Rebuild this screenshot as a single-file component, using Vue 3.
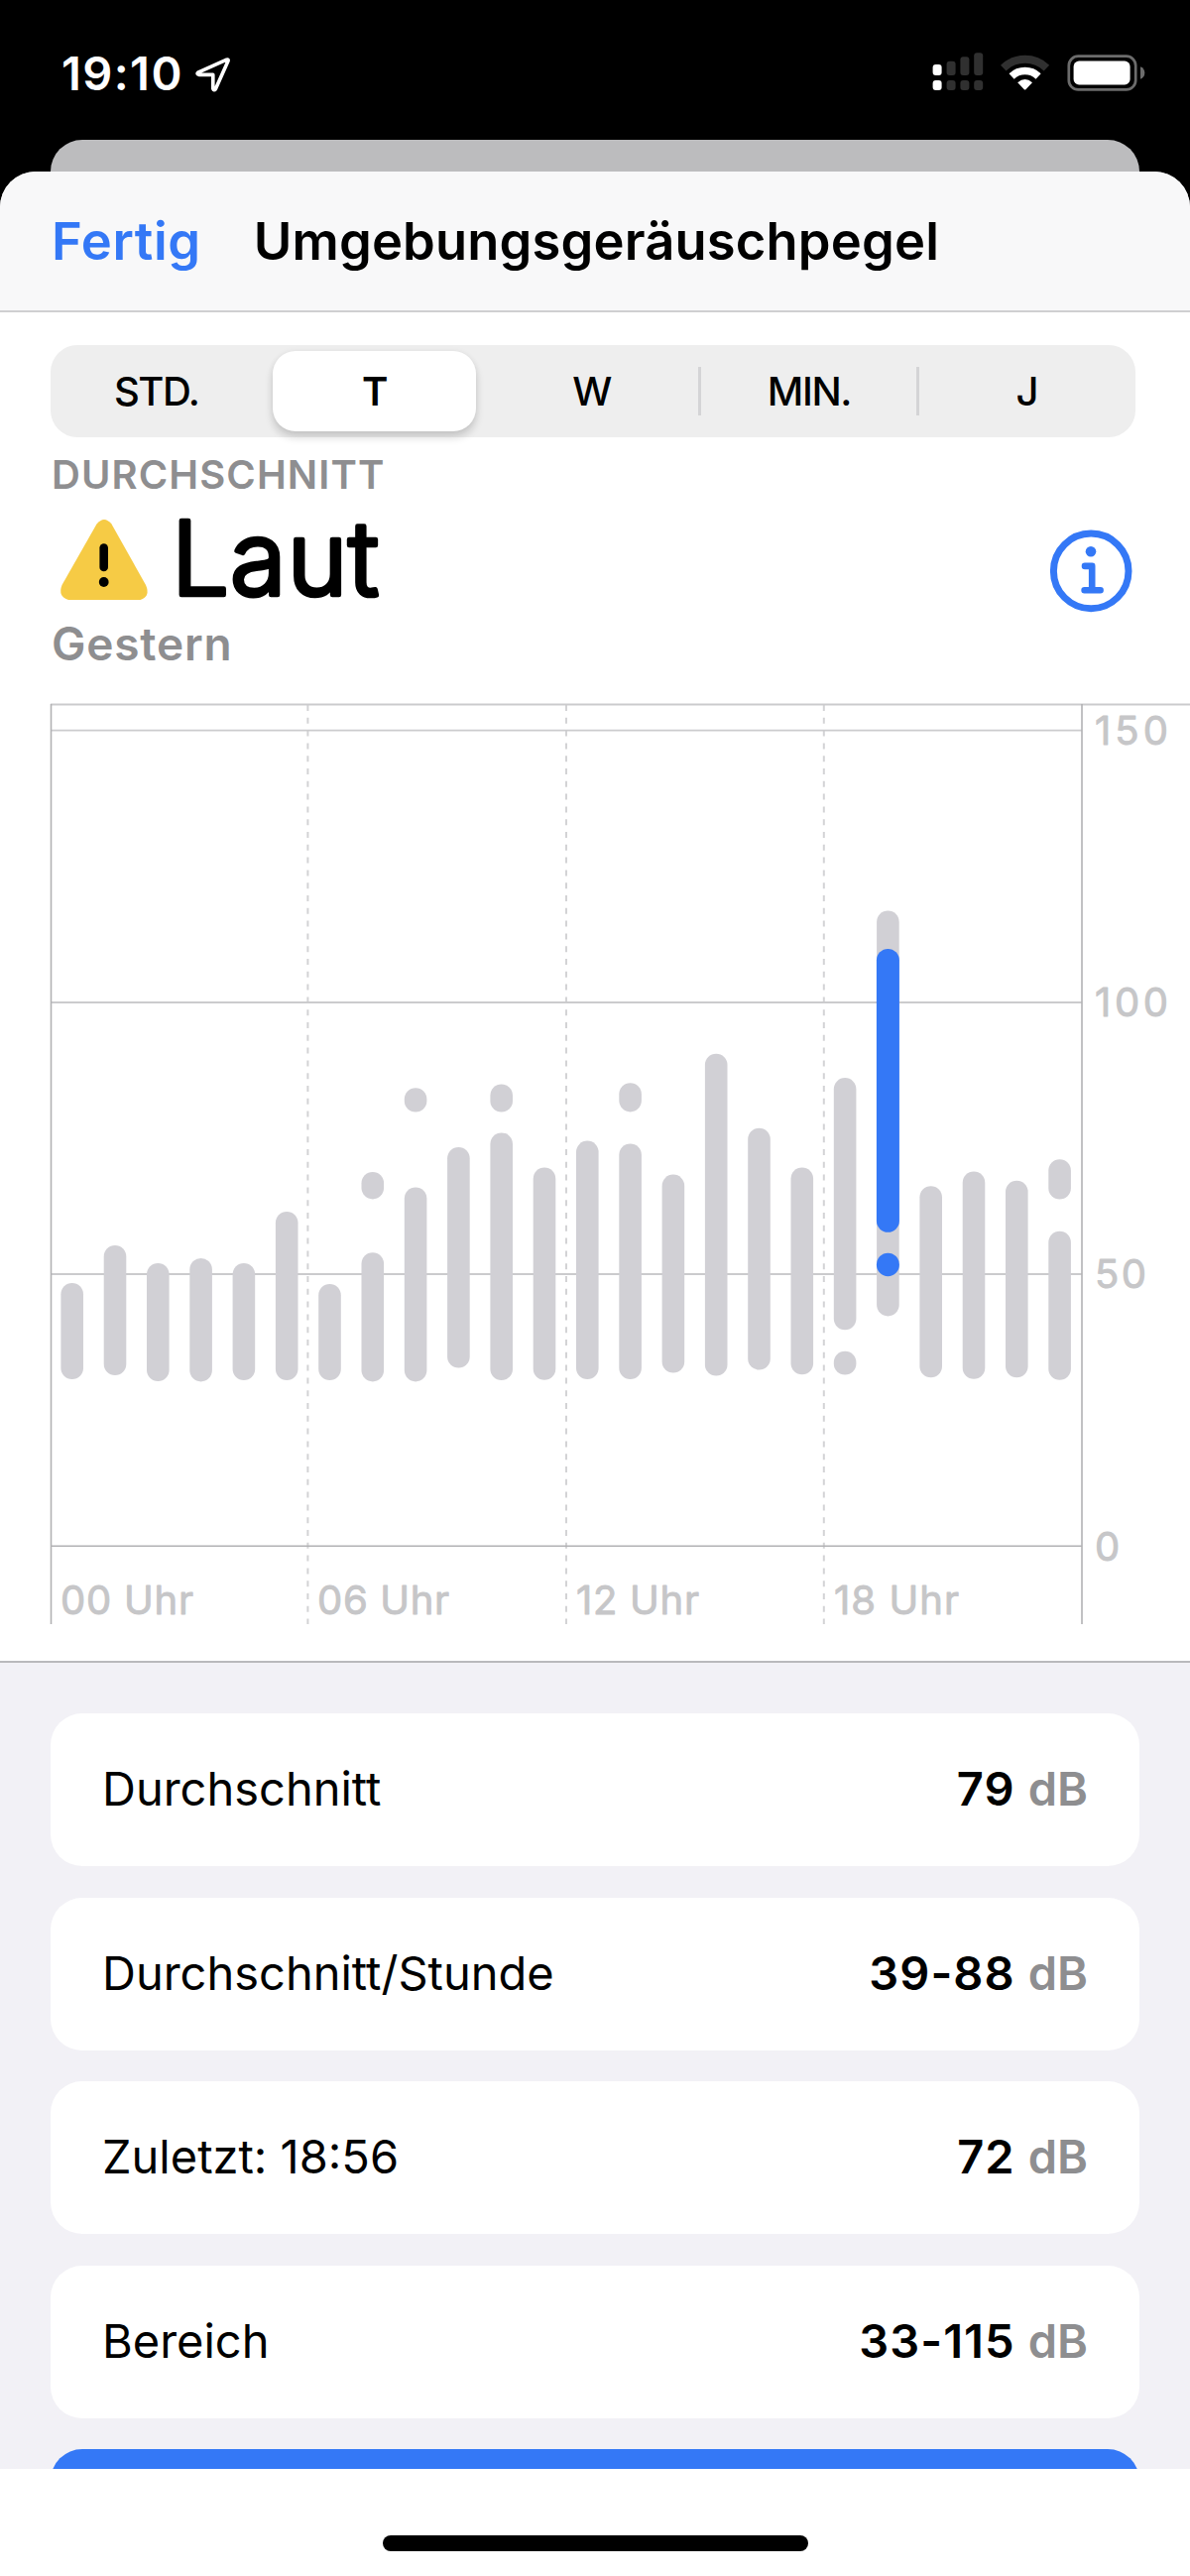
<script setup>
import { ref } from 'vue'

const ranges = ['STD.', 'T', 'W', 'MIN.', 'J']
const selected = ref(1)

const stats = [
  { label: 'Durchschnitt', value: '79' },
  { label: 'Durchschnitt/Stunde', value: '39-88' },
  { label: 'Zuletzt: 18:56', value: '72' },
  { label: 'Bereich', value: '33-115' },
]

const gridLines = [
  { label: '150', y: 736.7, width: 70 },
  { label: '100', y: 1011, width: 70 },
  { label: '50', y: 1285, width: 48 },
]

const hours = [
  { label: '00 Uhr', x: 62, width: 132 },
  { label: '06 Uhr', x: 321, width: 131 },
  { label: '12 Uhr', x: 582, width: 122 },
  { label: '18 Uhr', x: 842, width: 124 },
]

// one entry per hour, each with its [top, bottom] segments
const bars = [
  [[1294, 1391]],
  [[1256, 1387]],
  [[1274, 1393]],
  [[1269, 1393.4]],
  [[1274, 1392]],
  [[1222, 1392]],
  [[1295, 1392]],
  [[1182, 1209.4], [1263.3, 1393.4]],
  [[1097.3, 1121.6], [1197.5, 1393.4]],
  [[1157, 1379.6]],
  [[1093.5, 1121.6], [1142.4, 1392]],
  [[1177.5, 1391.8]],
  [[1150.6, 1391]],
  [[1092.2, 1121.4], [1153.5, 1391]],
  [[1184.6, 1384.6]],
  [[1062.7, 1387.6]],
  [[1137.7, 1381.6]],
  [[1177.4, 1386.2]],
  [[1087.1, 1341.2], [1362.7, 1386.6]],
  [[918.4, 1327.4]],
  [[1196.3, 1389.2]],
  [[1181.5, 1390.8]],
  [[1190.7, 1389.2]],
  [[1169.3, 1209.6], [1241.7, 1391.7]],
]

const highlight = [[957, 1242.8], [1263.7, 1287.2]]

const barX = (i) => 61.4 + i * 43.3
</script>

<template>
  <div class="phone">
    <header class="status-bar">
      <span class="time">19:10</span>
      <svg class="location" width="36" height="36" viewBox="0 0 36 36">
        <path d="M2.6 15.2 31.6 2.2Q33.6 1.6 33 3.6L20.4 31.8Q18.6 34 17.8 31.4V17.4H3.6Q1.2 16.6 2.6 15.2Z" />
      </svg>
      <svg class="signals" width="216" height="44" viewBox="940 50 216 44">
        <g fill="#fff">
          <rect x="940.6" y="65" width="9" height="11" rx="3" />
          <rect x="940.6" y="81" width="9" height="10" rx="3" />
        </g>
        <g fill="#303030">
          <rect x="954.6" y="61.7" width="9" height="14.3" rx="3" />
          <rect x="968.4" y="57.3" width="9" height="18.7" rx="3" />
          <rect x="982.2" y="53.3" width="9" height="22.7" rx="3" />
          <rect x="954.6" y="81" width="9" height="10" rx="3" />
          <rect x="968.4" y="81" width="9" height="10" rx="3" />
          <rect x="982.2" y="81" width="9" height="10" rx="3" />
        </g>
        <path d="M1011.8 68.6A31.5 31.5 0 0 1 1055.4 68.6" fill="none" stroke="#303030" stroke-width="8" />
        <path d="M1020.1 77A19.5 19.5 0 0 1 1047.1 77" fill="none" stroke="#fff" stroke-width="7.4" />
        <path d="M1026.2 83.3Q1033.6 76.8 1041 83.3L1034.4 90.2Q1033.6 91 1032.8 90.2Z" fill="#fff" />
        <rect x="1077.8" y="56.7" width="67.4" height="33.7" rx="9.5" fill="none" stroke="#6c6c6c" stroke-width="2.7" />
        <rect x="1082.6" y="61.6" width="57" height="23.8" rx="5.5" fill="#fff" />
        <path d="M1150 67.3Q1154.3 69 1154.3 73.5T1150 79.8Z" fill="#6c6c6c" />
      </svg>
    </header>

    <div class="back-card"></div>

    <main class="sheet">
      <nav class="nav-bar">
        <a class="done">Fertig</a>
        <h1 class="title">Umgebungsgeräuschpegel</h1>
      </nav>

      <section class="summary">
        <div class="segmented">
          <div class="segments">
            <button
              v-for="(range, i) in ranges"
              :key="range"
              class="segment"
              :class="{ active: selected === i, divided: i > selected + 1 }"
              @click="selected = i"
            >
              {{ range }}
            </button>
          </div>
        </div>

        <p class="caption">DURCHSCHNITT</p>
        <div class="level">
          <svg class="level-text" width="340" height="110" viewBox="51 506 340 110">
            <path d="M97.5 528.5Q105 519.5 112.5 528.5L147 590Q152 601.5 141.5 605H69Q58 601.5 62.5 590Z" fill="#f6cb45" />
            <path d="M104.7 552.5V572" stroke="#000" stroke-width="8.6" stroke-linecap="round" />
            <circle cx="104.7" cy="587" r="4.9" />
            <text class="loud" x="173" y="599.5" textLength="209">Laut</text>
          </svg>
          <svg class="info" width="84" height="84" viewBox="1058 534.5 84 84">
            <circle cx="1100.2" cy="576.4" r="37.8" fill="none" stroke="#3478f6" stroke-width="7" />
            <circle cx="1100" cy="556.8" r="5.3" fill="#3478f6" />
            <path d="M1094 571.4H1101.2V595.8M1093.6 595.8H1109.6" />
          </svg>
        </div>
        <p class="period">Gestern</p>
      </section>

      <svg class="chart" width="1200" height="966" viewBox="0 709 1200 966">
        <g class="dashes">
          <path d="M310.4 711V1638" />
          <path d="M571 711V1638" />
          <path d="M830.8 711V1638" />
        </g>
        <path d="M51 710.5H1200" class="grid" />
        <path v-for="line in gridLines" :key="line.label" :d="`M51 ${line.y}H1091`" class="grid" />
        <path d="M51 1559.3H1091" class="axis" />
        <path d="M51.5 710V1638" class="axis" />
        <path d="M1091 710V1638" class="axis" />

        <g fill="#d1d0d5">
          <template v-for="(segments, i) in bars" :key="i">
            <rect
              v-for="[top, bottom] in segments"
              :key="top"
              :x="barX(i)"
              :y="top"
              width="22.6"
              :height="bottom - top"
              rx="11.3"
            />
          </template>
        </g>
        <g fill="#3478f6">
          <rect
            v-for="[top, bottom] in highlight"
            :key="top"
            :x="barX(19) - 0.2"
            :y="top"
            width="23"
            :height="bottom - top"
            rx="11.5"
          />
        </g>

        <g class="labels">
          <text
            v-for="line in gridLines"
            :key="line.label"
            x="1104"
            :y="line.y + 14.2"
            :textLength="line.width + 4"
          >
            {{ line.label }}
          </text>
          <text x="1104" y="1573.5">0</text>
          <text v-for="hour in hours" :key="hour.label" :x="hour.x - 1" y="1627.6" :textLength="hour.width + 2">
            {{ hour.label }}
          </text>
        </g>
      </svg>

      <section class="stats">
        <div v-for="stat in stats" :key="stat.label" class="stat">
          <span>{{ stat.label }}</span>
          <span class="value">{{ stat.value }} <span class="unit">dB</span></span>
        </div>
        <div class="stat more"></div>
      </section>

      <footer class="home">
        <div class="indicator"></div>
      </footer>
    </main>
  </div>
</template>

<style>
body {
  margin: 0;
  background: #000;
}
</style>

<style scoped>
.phone {
  width: 1200px;
  height: 2598px;
  overflow: hidden;
  display: flex;
  flex-direction: column;
  background: #000;
  font-family: Inter, 'Liberation Sans', sans-serif;
  color: #000;
}

h1,
p {
  margin: 0;
}

.status-bar {
  box-sizing: border-box;
  height: 141px;
  padding: 50px 44px 0 62px;
  display: flex;
  align-items: flex-start;
  color: #fff;
}

.time {
  font-size: 47px;
  line-height: 48px;
  font-weight: 600;
  letter-spacing: 1.4px;
}

.location {
  margin: 8px 0 0 12px;
  fill: none;
  stroke: #fff;
  stroke-width: 3.6;
  stroke-linejoin: round;
}

.signals {
  margin-left: auto;
}

.back-card {
  height: 32px;
  margin: 0 51px;
  border-radius: 32px 32px 0 0;
  background: #bcbcbe;
}

.sheet {
  flex: 1;
  display: flex;
  flex-direction: column;
  overflow: hidden;
  border-radius: 36px 36px 0 0;
  background: #fff;
}

.nav-bar {
  box-sizing: border-box;
  height: 142px;
  padding: 0 52px;
  display: flex;
  align-items: center;
  gap: 53px;
  background: #f8f8f9;
  border-bottom: 2px solid #cfcfd1;
  font-size: 52.5px;
  font-weight: 600;
}

.done {
  letter-spacing: 0.6px;
  color: #3478f6;
}

.title {
  font-size: 52.5px;
  font-weight: 600;
  letter-spacing: 0.15px;
}

.summary {
  height: 394px;
  padding: 0 51px;
}

.segmented {
  width: 1094px;
  height: 93px;
  margin-top: 33px;
  border-radius: 27px;
  background: #eeeeee;
}

.segments {
  height: 93px;
  margin-left: -3px;
  display: grid;
  grid-template-columns: repeat(5, 1fr);
}

.segment {
  margin: 6px 7px;
  padding: 0;
  border: 0;
  border-radius: 23px;
  background: none;
  font: 500 40px Inter, sans-serif;
  letter-spacing: -1.4px;
  color: #000;
}

.segment.active {
  margin-left: 8px;
  background: #fff;
  font-weight: 600;
  box-shadow: 0 6px 8px rgba(0, 0, 0, 0.16), 0 0 6px rgba(0, 0, 0, 0.05);
}

.segment.divided {
  margin-left: -2px;
  padding-left: 9px;
  background: linear-gradient(#d4d4d6, #d4d4d6) no-repeat 0 center / 3px 49px;
  border-radius: 0;
}

.caption {
  margin: 14px 0 0 1px;
  font-size: 40px;
  line-height: 48px;
  font-weight: 600;
  letter-spacing: 1.1px;
  color: #8e8e90;
}

.level {
  height: 110px;
  margin-top: 3px;
  display: flex;
  justify-content: space-between;
}

.level-text {
  overflow: visible;
}

.loud {
  font-size: 103px;
  font-weight: 300;
  stroke: #000;
  stroke-width: 4.6px;
  stroke-linejoin: round;
}

.info {
  margin: 28px 7px 0 0;
}

.info path {
  fill: none;
  stroke: #3478f6;
  stroke-width: 6.6;
  stroke-linecap: round;
  stroke-linejoin: round;
}

.period {
  margin: 5px 0 0 1px;
  font-size: 46px;
  line-height: 56px;
  font-weight: 600;
  letter-spacing: 0.8px;
  color: #8e8e90;
}

.chart {
  display: block;
  flex: none;
}

.grid {
  stroke: #cbcbcd;
  stroke-width: 1.8;
}

.axis {
  stroke: #b2b2b4;
  stroke-width: 1.6;
}

.dashes {
  stroke: #d3d3d5;
  stroke-width: 2;
  stroke-dasharray: 6 6.8;
}

.labels {
  font-size: 40px;
  font-weight: 400;
  fill: #c6c6c8;
  stroke: #c6c6c8;
  stroke-width: 0.9px;
  stroke-linejoin: round;
}

.stats {
  box-sizing: border-box;
  height: 815px;
  padding: 51px 51px 0;
  border-top: 2px solid #b9b9bc;
  display: flex;
  flex-direction: column;
  gap: 31.6px;
  overflow: hidden;
  background: #f2f1f6;
}

.stat {
  box-sizing: border-box;
  flex: none;
  height: 154px;
  padding: 0 52px 3px;
  display: flex;
  align-items: center;
  justify-content: space-between;
  border-radius: 32px;
  background: #fff;
  font-size: 47px;
}

.value {
  font-weight: 600;
  letter-spacing: 1.1px;
}

.unit {
  letter-spacing: 0;
  color: #8e8e90;
}

.stat.more {
  background: #3478f6;
}

.home {
  flex: 1;
  display: flex;
  justify-content: center;
  background: #fff;
}

.indicator {
  width: 429px;
  height: 16px;
  margin-top: 67px;
  border-radius: 8px;
  background: #000;
}
</style>
